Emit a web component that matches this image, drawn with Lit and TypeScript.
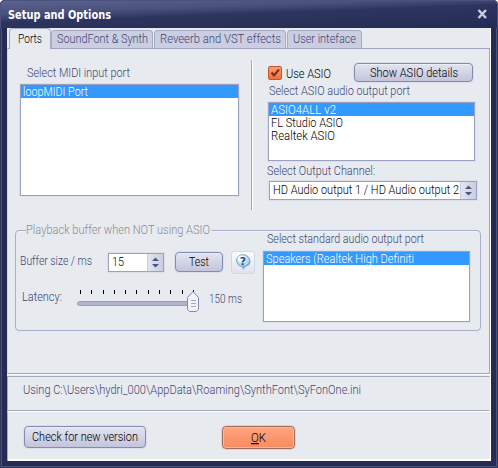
import { LitElement, html, svg, css, nothing } from "lit";
import { customElement, property } from "lit/decorators.js";
import { classMap } from "lit/directives/class-map.js";

/* One line of text set to an exact advance width; baseline sits 11px down. */
@customElement("ui-text")
class UiText extends LitElement {
  @property() text = "";
  @property({ type: Number }) w = 50;
  @property({ type: Boolean }) title_ = false;
  @property() key = "";
  static styles = css`
    :host { display: block; flex: none; height: 14px; }
    svg { display: block; overflow: visible; }
    text { font: 12.5px Roboto, "Liberation Sans", sans-serif; font-weight: 350; fill: currentColor; }
    text.title { font: bold 12px "DejaVu Sans", sans-serif; }
    .key { text-decoration: underline; }
  `;
  render() {
    const rest = this.key ? this.text.slice(1) : this.text;
    return html`<svg width=${this.w} height="14">
      <text class=${classMap({ title: this.title_ })} x="0" y="11" textLength=${this.w} lengthAdjust="spacingAndGlyphs">${
        this.key ? svg`<tspan class="key">${this.key}</tspan>` : nothing
      }${rest}</text></svg>`;
  }
}

@customElement("list-box")
class ListBox extends LitElement {
  @property({ attribute: false }) items: [string, number][] = [];
  static styles = css`
    :host { display: block; box-sizing: border-box; background: #fff; border: 1px solid #9ca1c4; box-shadow: 0 0 0 1px #dddfe9; }
    .item { height: 13px; padding-left: 2px; color: #000; }
    .item:first-child { background: #3399ff; color: #fff; }
  `;
  render() {
    return this.items.map(([t, w]) => html`<div class="item"><ui-text .text=${t} .w=${w}></ui-text></div>`);
  }
}

@customElement("spin-box")
class SpinBox extends LitElement {
  static styles = css`
    :host { display: flex; box-sizing: border-box; height: 19px; background: #fff; border: 1px solid #9ca1c4; box-shadow: 0 0 0 1px #dddfe9; color: #000; }
    .value { flex: 1; min-width: 0; overflow: hidden; padding: 1px 0 0 3px; }
    .arrows { flex: none; width: 16px; height: 17px; background: linear-gradient(90deg, #e2e4ef, #cacde0); border-left: 1px solid #c9ccdf; box-sizing: border-box; }
    svg { display: block; }
  `;
  render() {
    return html`<div class="value"><slot></slot></div>
      <div class="arrows"><svg width="15" height="17"><path d="M4 7h7L7.5 3.5zM4 10h7L7.5 13.5z" fill="#4c5485" /></svg></div>`;
  }
}

@customElement("app-root")
class AppRoot extends LitElement {
  static styles = css`
    :host { display: block; width: 498px; height: 468px; color: #3f4673; }
    * { box-sizing: border-box; }
    .window { width: 498px; height: 468px; padding: 0 7px 7px; overflow: hidden; background: #252c54;
      border-radius: 5px 5px 0 0; box-shadow: inset 0 0 0 1px #30375f, inset 0 0 0 2px #4b5280; }
    .bar { height: 28px; margin: 0 -7px; padding: 7px 10px 0 7px; display: flex; justify-content: space-between; color: #fff;
      border: solid #4b5280; border-width: 1px 1px 0; border-radius: 5px 5px 0 0;
      background: linear-gradient(178deg, #5c628d 0, #4b527e 28%, #3e4570 38%, #2d345e 48%, #252c54 100%); }
    .close { margin-top: 1px; }
    svg { display: block; }
    .body { height: 433px; background: #e7eaef; border-right: 1px solid #fff; border-bottom: 2px solid #fff; }
    .tabs { display: flex; height: 20px; align-items: flex-end; padding-left: 2px; }
    .tab { height: 18px; padding: 1px 0 0 5px; margin-right: 1px; border: 1px solid #a6abc8; border-bottom: 0; border-radius: 4px 4px 0 0; background: #cbcde0; }
    .tab.on { height: 21px; margin-bottom: -1px; padding: 3px 0 0 8px; margin-right: 0; background: #e7eaef; color: #000; position: relative; }
    .page { height: 326px; width: 483px; border: 1px solid #a0a4c2; border-left-color: #d4d7e3; box-shadow: 0 1px #fff; }
    .upper { display: grid; grid-template-columns: 243px 2px 1fr; height: 181px; }
    .left { padding: 17px 0 0 12px; }
    .left ui-text { margin-left: 7px; }
    .left list-box { width: 219px; height: 112px; margin-top: 4px; }
    .rule { height: 150px; margin-top: 11px; border-left: 1px solid #a3a9b9; border-right: 1px solid #fff; }
    .right { padding: 14px 0 0 15px; }
    .row { display: flex; align-items: flex-start; }
    .check { width: 14px; height: 14px; margin-top: 3px; border: 1px solid #c15635; border-radius: 2px; background: linear-gradient(#ff9c70, #ef7045); }
    .asio-label { padding: 4px 0 0 4px; color: #000; }
    .ports-label { padding: 2px 0 0 1px; }
    .channel-label { padding-top: 3px; margin-left: -1px; }
    .btn { display: flex; justify-content: center; border: 1px solid #828bb5; border-radius: 4px; color: #000;
      background: linear-gradient(#e2e4ef, #d2d5e6 50%, #c2c5dc); box-shadow: 0 0 0 1px #dcdfe9, inset 0 1px #eceef7; }
    .asio { width: 119px; height: 19px; padding-top: 2px; margin-left: 23px; }
    .outputs { width: 207px; height: 59px; margin-top: 4px; }
    .channel { width: 208px; margin: 3px 0 0 1px; }
    .group { height: 101px; width: 466px; margin-left: 7px; border: 1px solid #a8adcb; border-radius: 4px; display: flex; box-shadow: inset 0 1px #f1f3f7; }
    .buffer { width: 247px; }
    .legend { width: 185px; height: 14px; margin: -8px 0 0 10px; background: #e7eaef; color: #8c8c8c; }
    .size { padding: 14px 0 0 4px; height: 53px; }
    .size ui-text.lbl { margin-top: 3px; }
    .size spin-box { width: 56px; margin: 2px 11px 0 16px; }
    .test { width: 48px; height: 20px; margin: 1px 8px 0 0; padding-top: 2px; }
    .help { width: 24px; height: 23px; border: 1px solid #d3d6e5; border-radius: 3px; background: linear-gradient(#fafbfe, #dfe1ed); }
    .latency { padding-left: 6px; }
    .latency .ms { margin: 2px 0 0 6px; }
    .standard-label { padding: 1px 0 0 4px; }
    .standard list-box { width: 207px; height: 71px; margin-top: 5px; }
    .status { height: 35px; margin-top: 2px; padding: 6px 0 0 15px; border: 1px solid #9fa9bf; border-right-color: #e7eaef; }
    .footer { height: 50px; border-top: 1px solid #fff; border-left: 1px solid #9fa9bf; padding: 14px 0 0 16px; display: flex; }
    .version { width: 122px; height: 22px; padding-top: 3px; }
    .ok { width: 73px; height: 23px; padding-top: 4px; margin-left: 76px; border-color: #a56b5c;
      background: linear-gradient(#ffa780, #fb946b 60%, #f98b60); box-shadow: 0 0 0 1px #d9d5d7, inset 0 0 0 1px #ffb795; }
  `;
  t(text: string, w: number, cls = "") {
    return html`<ui-text class=${cls} .text=${text} .w=${w}></ui-text>`;
  }
  render() {
    const tabs: [string, number, number][] = [["Ports", 24, 42], ["SoundFont & Synth", 91, 102], ["Reveerb and VST effects", 121, 132], ["User inteface", 63, 75]];
    const ticks = [80, 91, 103, 114, 125, 136, 148, 159, 170, 182, 193];
    return html`<div class="window">
      <div class="bar">
        <ui-text .text=${"Setup and Options"} .w=${103} .title_=${true}></ui-text>
        <svg class="close" width="10" height="10"><path d="M1.500 1l7.500 8M9 1l-7.500 8" stroke="#c9cce0" stroke-width="2.500" /></svg>
      </div>
      <div class="body">
        <div class="tabs">${tabs.map(([n, w, box], i) => html`<div class=${classMap({ tab: true, on: i === 0 })} style="width:${box}px">${this.t(n, w)}</div>`)}</div>
        <div class="page">
          <div class="upper">
            <div class="left">${this.t("Select MIDI input port", 103)}
              <list-box .items=${[["loopMIDI Port", 65]]}></list-box></div>
            <div class="rule"></div>
            <div class="right">
              <div class="row"><div class="check"><svg width="12" height="12"><path d="M2.5 5.5l2.5 3 5-6" fill="none" stroke="#70301c" stroke-width="2" /></svg></div>
                <div class="asio-label">${this.t("Use ASIO", 45)}</div>
                <div class="btn asio">${this.t("Show ASIO details", 88)}</div></div>
              <div class="ports-label">${this.t("Select ASIO audio output port", 141)}</div>
              <list-box class="outputs" .items=${[["ASIO4ALL v2", 65], ["FL Studio ASIO", 72], ["Realtek ASIO", 64]]}></list-box>
              <div class="channel-label">${this.t("Select Output Channel:", 108)}</div>
              <spin-box class="channel">${this.t("HD Audio output 1 / HD Audio output 2", 186)}</spin-box>
            </div>
          </div>
          <div class="group">
            <div class="buffer">
              <div class="legend">${this.t("Playback buffer when NOT using ASIO", 184)}</div>
              <div class="row size">${this.t("Buffer size / ms", 72, "lbl")}
                <spin-box>${this.t("15", 12)}</spin-box>
                <div class="btn test">${this.t("Test", 20)}</div>
                <div class="help"><svg width="22" height="21">
                  <path d="M11.5 4c4.3 0 7 2.1 7 5.5 0 3-2 4.6-4.5 5.1l-3 3.4-1-3.3c-3-.4-5.2-2.200-5.200-5.200C4.800 6.100 7.300 4 11.500 4z" fill="#9caabd" />
                  <ellipse cx="11" cy="8.500" rx="6.500" ry="5.800" fill="#b3dcf2" stroke="#77a7cb" />
                  <ellipse cx="10" cy="7" rx="4.500" ry="3.500" fill="#effaff" />
                  <text x="11" y="12.500" text-anchor="middle" font-family="DejaVu Sans" font-size="11" font-weight="bold" fill="#174b9c">?</text></svg></div>
              </div>
              <div class="row latency">${this.t("Latency:", 40)}
                <svg width="141" height="26">
                  ${ticks.map((x) => svg`<rect x=${x - 62} y="0" width="1" height="4" fill="#000" />`)}
                  <rect x="15.500" y="11.500" width="112" height="4" rx="2" fill="#b0b4d1" stroke="#989dc2" />
                  <path d="M125.500 19.500v-12l5.500-6 5.500 6v12l-2 2h-7z" fill="#f2f3f9" stroke="#8088b5" />
                  <path d="M129 10.500h5M129 13.500h5M129 16.500h5" stroke="#a3a8c6" />
                </svg>
                ${this.t("150 ms", 33, "ms")}</div>
            </div>
            <div class="standard"><div class="standard-label">${this.t("Select standard audio output port", 157)}</div>
              <list-box .items=${[["Speakers (Realtek High Definiti", 148]]}></list-box></div>
          </div>
        </div>
        <div class="status">${this.t("Using C:\\Users\\hydri_000\\AppData\\Roaming\\SynthFont\\SyFonOne.ini", 338)}</div>
        <div class="footer"><div class="btn version">${this.t("Check for new version", 106)}</div>
          <div class="btn ok"><ui-text .text=${"OK"} .w=${15} .key=${"O"}></ui-text></div></div>
      </div>
    </div>`;
  }
}
